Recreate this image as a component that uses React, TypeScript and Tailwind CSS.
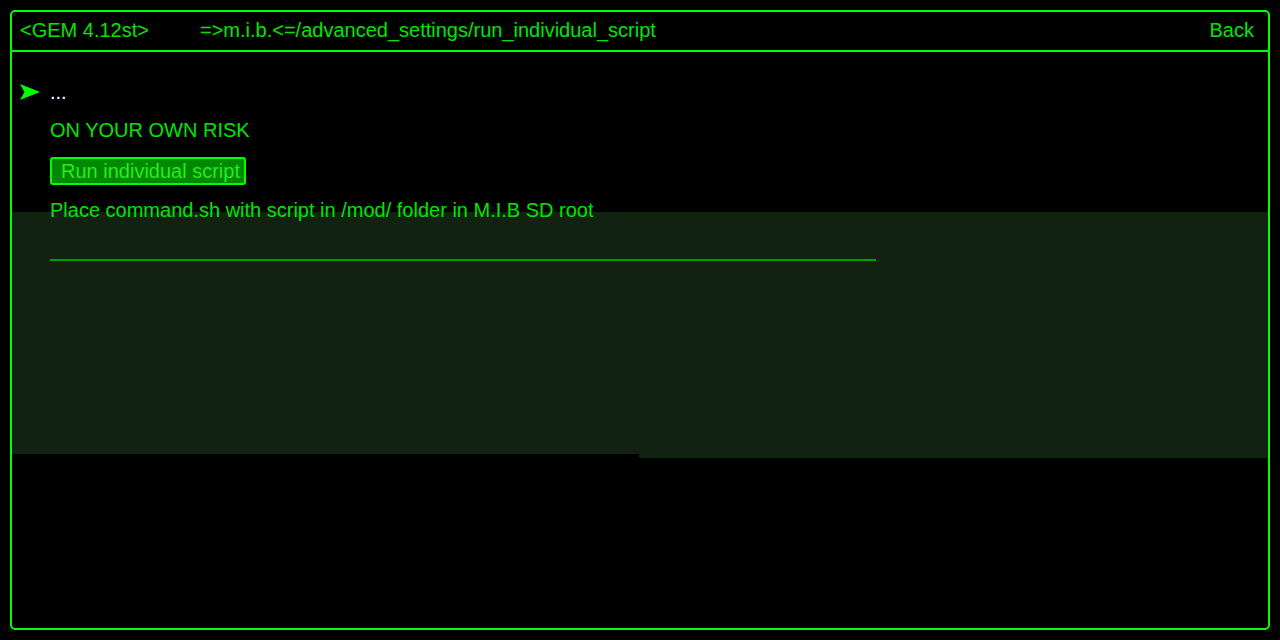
import React from "react";

export default function App() {
  const font = { fontFamily: '"Liberation Sans", Arial, sans-serif' };
  return (
    <div className="w-[1280px] h-[640px] bg-black p-[10px] overflow-hidden" style={font}>
      <div className="relative w-[1260px] h-[620px] border-2 border-[#00ff00] rounded-[5px] flex flex-col">
        {/* dark green glitch panel */}
        <div className="absolute left-0 top-[200px] w-[627px] h-[242px] bg-[#112211]" />
        <div className="absolute left-[627px] top-[200px] w-[629px] h-[246px] bg-[#112211]" />

        <div className="relative h-[40px] pb-[2px] flex items-center px-[8px] text-[20px] text-[#00e600] border-b-2 border-[#00ff00] shrink-0">
          <span className="w-[180px]">&lt;GEM 4.12st&gt;</span>
          <span>=&gt;m.i.b.&lt;=/advanced_settings/run_individual_script</span>
          <span className="ml-auto mr-[6px]">Back</span>
        </div>

        <div className="relative flex flex-col pt-[21px] text-[20px] text-[#00e600]">
          <div className="h-[38px] flex items-center">
            <svg width="20" height="16" viewBox="0 0 20 16" className="ml-[8px] mr-[10px]">
              <path d="M0 0 L20 8 L0 16 L4.5 8 Z" fill="#00ff00" />
            </svg>
            <span className="text-white">...</span>
          </div>
          <div className="h-[38px] flex items-center pl-[38px]">ON YOUR OWN RISK</div>
          <div className="h-[44px] flex items-center pl-[38px]">
            <div className="h-[28px] w-[196px] border-2 border-[#00ff00] rounded-[3px] bg-[#008800] flex items-center pl-[9px] text-[#22ee22] leading-none">
              Run individual script
            </div>
          </div>
          <div className="h-[34px] flex items-center pl-[38px]">
            Place command.sh with script in /mod/ folder in M.I.B SD root
          </div>
          <div className="mt-[32px] ml-[38px] h-[2px] w-[826px] bg-[#00a000]" />
        </div>
      </div>
    </div>
  );
}
